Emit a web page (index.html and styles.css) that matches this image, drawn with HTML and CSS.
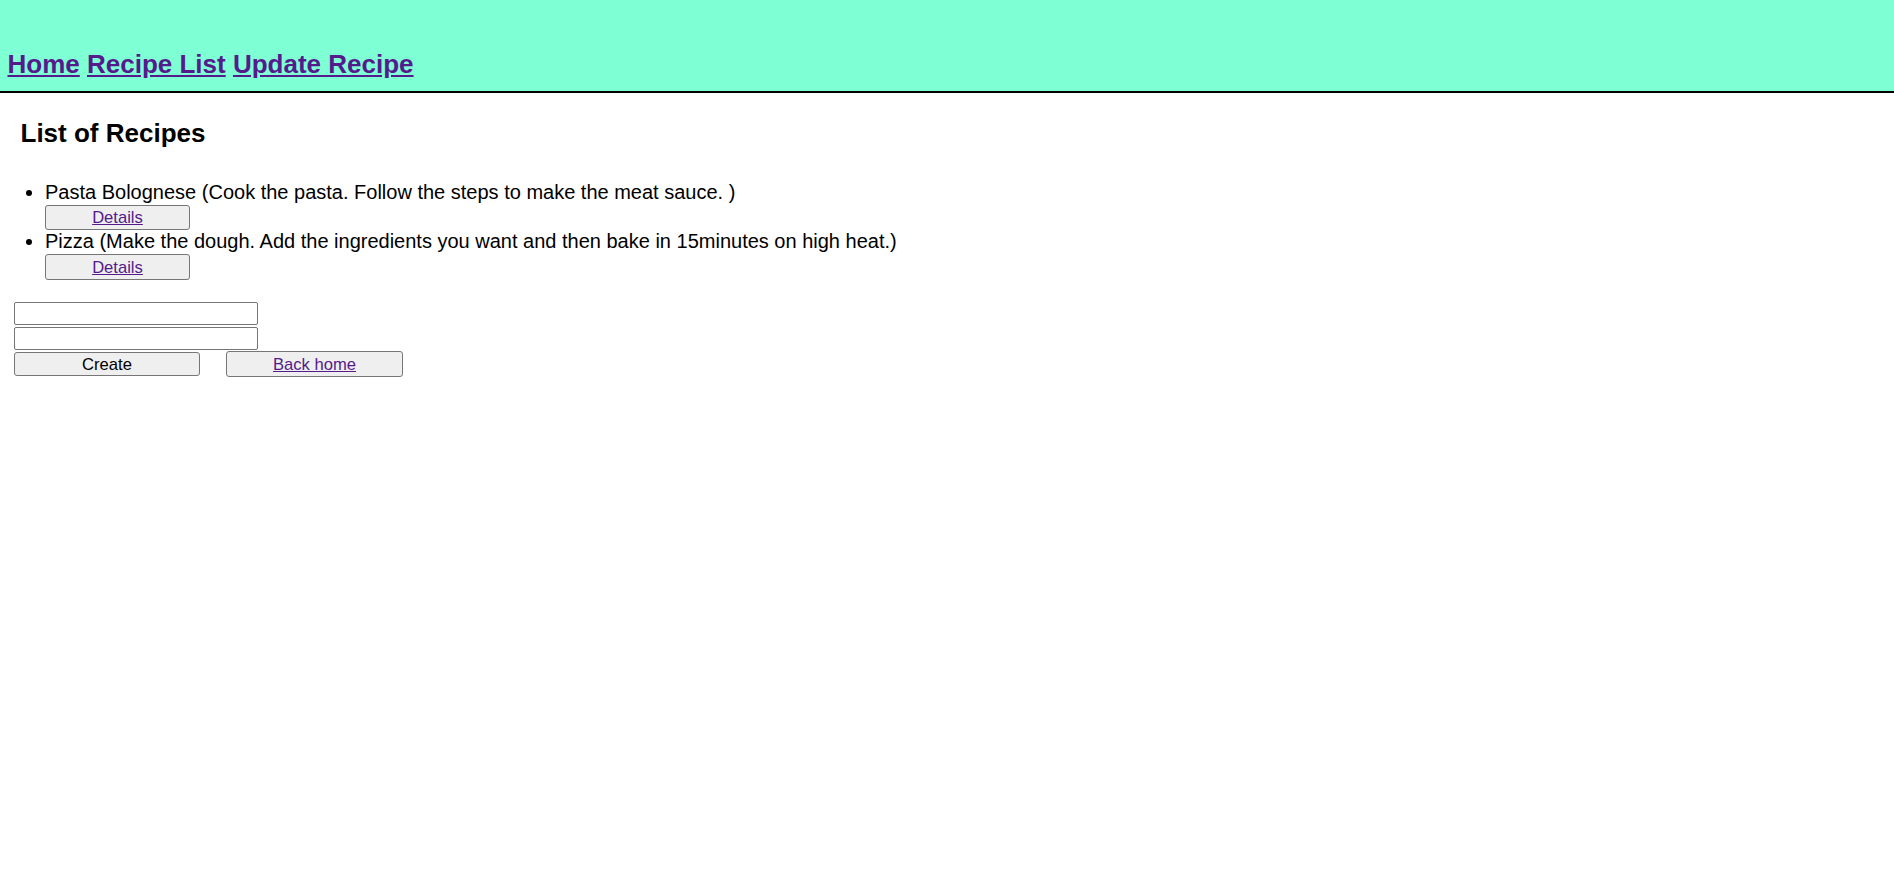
FILE: index.html
```html
<!DOCTYPE html>
<html>
<head>
<meta charset="utf-8">
<title>Recipes</title>
<link rel="stylesheet" href="styles.css">
</head>
<body>
<header class="topbar">
  <nav class="nav">
    <a href="#" class="nav-link">Home</a>
    <a href="#" class="nav-link">Recipe List</a>
    <a href="#" class="nav-link">Update Recipe</a>
  </nav>
</header>
<main class="content">
  <h2 class="title">List of Recipes</h2>
  <ul class="recipes">
    <li class="recipe">
      <div class="recipe-text">Pasta Bolognese (Cook the pasta. Follow the steps to make the meat sauce. )</div>
      <button class="btn btn-details"><a href="#">Details</a></button>
    </li>
    <li class="recipe">
      <div class="recipe-text">Pizza (Make the dough. Add the ingredients you want and then bake in 15minutes on high heat.)</div>
      <button class="btn btn-details"><a href="#">Details</a></button>
    </li>
  </ul>
  <form class="create-form">
    <input class="field" type="text">
    <input class="field field-last" type="text">
    <div class="actions">
      <button type="button" class="btn btn-create">Create</button>
      <button type="button" class="btn btn-back"><a href="#">Back home</a></button>
    </div>
  </form>
</main>
</body>
</html>
```
FILE: styles.css
```css
html, body {
  margin: 0;
  padding: 0;
  background: #ffffff;
}
body {
  font-family: "Liberation Sans", Arial, sans-serif;
  color: #000;
  font-size: 20px;
}
a {
  color: #551a8b;
}
.topbar {
  background: #7fffd4;
  height: 91px;
  border-bottom: 2px solid #000;
  box-sizing: content-box;
  display: flex;
  align-items: flex-end;
}
.nav {
  padding: 0 0 12px 7.5px;
  font-size: 26px;
  font-weight: bold;
  line-height: 30px;
}
.nav-link {
  color: #551a8b;
}
.content {
  padding: 0 0 0 14px;
}
.title {
  font-size: 26px;
  font-weight: bold;
  margin: 0;
  padding: 25px 0 0 6.5px;
  line-height: 30px;
}
.recipes {
  margin: 33px 0 0 0;
  padding-left: 31px;
}
.recipe-text {
  line-height: 23px;
}
.btn {
  font-family: "Liberation Sans", Arial, sans-serif;
  font-size: 16.6px;
  line-height: 19px;
  background: #efefef;
  border: 1px solid #767676;
  border-radius: 3px;
  padding: 0;
  box-sizing: border-box;
  color: #000;
  display: block;
}
.btn-details {
  width: 145px;
  height: 25px;
  margin-top: 1px;
}
.recipe:last-child .btn-details {
  height: 26px;
}
.create-form {
  margin-top: 22px;
  display: flex;
  flex-direction: column;
  align-items: flex-start;
}
.field {
  width: 244px;
  height: 23px;
  box-sizing: border-box;
  border: 1px solid #767676;
  border-radius: 2px;
  margin: 0 0 2px 0;
  padding: 0;
}
.field-last {
  margin-bottom: 1px;
}
.actions {
  display: flex;
  align-items: center;
  gap: 26px;
}
.btn-create {
  width: 186px;
  height: 24px;
}
.btn-back {
  width: 177px;
  height: 26px;
}
```
